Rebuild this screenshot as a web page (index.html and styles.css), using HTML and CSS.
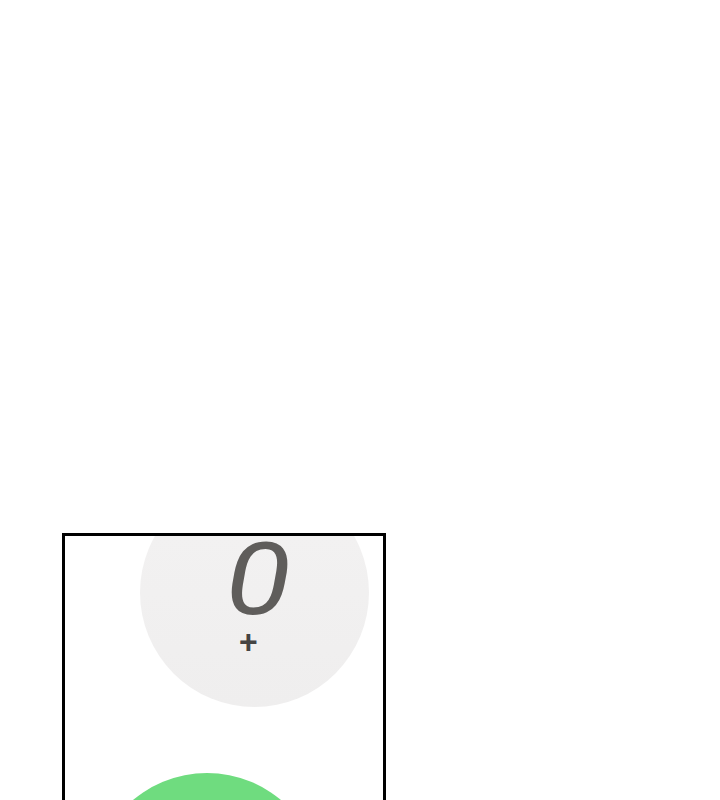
FILE: index.html
```html
<!DOCTYPE html>
<html>
<head>
<meta charset="utf-8">
<link rel="stylesheet" href="styles.css">
</head>
<body>
<div class="frame">
  <div class="dial">
    <span class="digit">0</span>
    <span class="plus">+</span>
  </div>
  <div class="call"></div>
</div>
</body>
</html>
```
FILE: styles.css
```css
html, body {
  margin: 0;
  padding: 0;
  background: #ffffff;
  height: 800px;
  overflow: hidden;
  font-family: Roboto, "Liberation Sans", sans-serif;
}
.frame {
  box-sizing: border-box;
  margin: 533px 0 0 62px;
  width: 324px;
  height: 320px;
  border: 3px solid #000;
  overflow: hidden;
  display: flex;
  flex-direction: column;
}
.dial {
  flex: none;
  width: 229px;
  height: 229px;
  border-radius: 50%;
  margin: -58px 0 0 75px;
  background: linear-gradient(#f3f2f2, #efeeee);
  display: flex;
  flex-direction: column;
  align-items: center;
}
.digit {
  display: block;
  margin-top: 64px;
  font-style: italic;
  font-weight: 400;
  font-size: 100px;
  line-height: 76px;
  height: 76px;
  color: #5f5d5b;
  margin-left: 8px;
  transform: scaleX(1.2);
}
.plus {
  display: block;
  margin-top: 12px;
  font-size: 33px;
  font-weight: 500;
  line-height: 26px;
  height: 26px;
  color: #454443;
  margin-right: 12px;
}
.call {
  flex: none;
  width: 230px;
  height: 230px;
  border-radius: 50%;
  margin: 66px 0 0 27px;
  background: #6fdc7f;
}
```
